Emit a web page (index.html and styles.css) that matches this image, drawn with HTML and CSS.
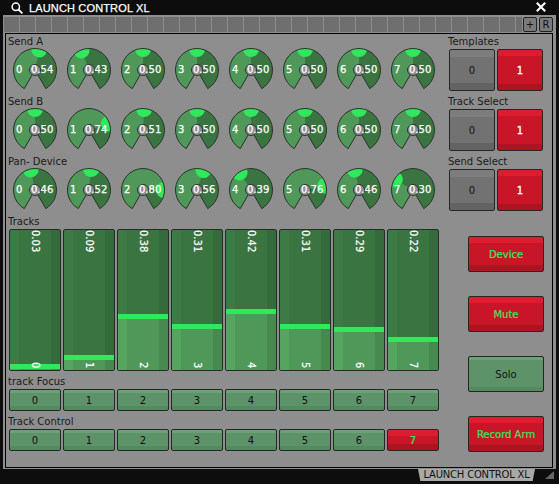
FILE: index.html
```html
<!DOCTYPE html>
<html lang="en">
<head>
<meta charset="utf-8">
<title>Launch Control XL</title>
<link rel="stylesheet" href="styles.css">
</head>
<body>
<svg class="defs" width="0" height="0" aria-hidden="true">
  <defs>
    <clipPath id="dial-clip"><path d="M22 22L11.25 40.62A21.5 21.5 0 1 1 32.75 40.62Z"/></clipPath>
    <symbol id="dial" viewBox="0 0 44 44">
      <g clip-path="url(#dial-clip)">
        <rect class="dial-dark" width="44" height="44"/>
        <circle class="dial-light" cx="22" cy="22" r="12" pathLength="360"/>
        <circle class="dial-cap" cx="22" cy="1" r="8"/>
      </g>
      <path class="dial-line" d="M22 22L11.25 40.62A21.5 21.5 0 1 1 32.75 40.62Z"/>
      <circle class="dial-hole" cx="22" cy="22" r="5.5"/>
    </symbol>
  </defs>
</svg>
<div class="window">
  <header class="titlebar">
    <svg class="search" width="12" height="12" viewBox="0 0 12 12"><circle cx="4.8" cy="4.8" r="3.7" fill="none" stroke="#fff" stroke-width="1.5"/><path d="M7.4 7.4L11.4 11.4" stroke="#fff" stroke-width="1.9"/></svg>
    <span class="title">LAUNCH CONTROL XL</span>
    <svg class="close" width="10" height="10" viewBox="0 0 10 10"><path d="M.8 .8L9.2 9.2M9.2 .8L.8 9.2" stroke="#fff" stroke-width="2.1"/></svg>
  </header>
  <div class="toolbar">
    <div class="cells"></div>
    <div class="tool">+</div>
    <div class="tool">R</div>
  </div>
  <div class="frame">
    <main class="panel">
      <section class="left">
        <div class="label">Send A</div>
        <div class="knobs">
          <div class="knob" style="--v:.54"><svg class="dial" viewBox="0 0 44 44"><use href="#dial"/></svg><span class="idx">0</span><span class="val">0.54</span></div>
          <div class="knob" style="--v:.43"><svg class="dial" viewBox="0 0 44 44"><use href="#dial"/></svg><span class="idx">1</span><span class="val">0.43</span></div>
          <div class="knob" style="--v:.5"><svg class="dial" viewBox="0 0 44 44"><use href="#dial"/></svg><span class="idx">2</span><span class="val">0.50</span></div>
          <div class="knob" style="--v:.5"><svg class="dial" viewBox="0 0 44 44"><use href="#dial"/></svg><span class="idx">3</span><span class="val">0.50</span></div>
          <div class="knob" style="--v:.5"><svg class="dial" viewBox="0 0 44 44"><use href="#dial"/></svg><span class="idx">4</span><span class="val">0.50</span></div>
          <div class="knob" style="--v:.5"><svg class="dial" viewBox="0 0 44 44"><use href="#dial"/></svg><span class="idx">5</span><span class="val">0.50</span></div>
          <div class="knob" style="--v:.5"><svg class="dial" viewBox="0 0 44 44"><use href="#dial"/></svg><span class="idx">6</span><span class="val">0.50</span></div>
          <div class="knob" style="--v:.5"><svg class="dial" viewBox="0 0 44 44"><use href="#dial"/></svg><span class="idx">7</span><span class="val">0.50</span></div>
        </div>
        <div class="label">Send B</div>
        <div class="knobs">
          <div class="knob" style="--v:.5"><svg class="dial" viewBox="0 0 44 44"><use href="#dial"/></svg><span class="idx">0</span><span class="val">0.50</span></div>
          <div class="knob" style="--v:.74"><svg class="dial" viewBox="0 0 44 44"><use href="#dial"/></svg><span class="idx">1</span><span class="val">0.74</span></div>
          <div class="knob" style="--v:.51"><svg class="dial" viewBox="0 0 44 44"><use href="#dial"/></svg><span class="idx">2</span><span class="val">0.51</span></div>
          <div class="knob" style="--v:.5"><svg class="dial" viewBox="0 0 44 44"><use href="#dial"/></svg><span class="idx">3</span><span class="val">0.50</span></div>
          <div class="knob" style="--v:.5"><svg class="dial" viewBox="0 0 44 44"><use href="#dial"/></svg><span class="idx">4</span><span class="val">0.50</span></div>
          <div class="knob" style="--v:.5"><svg class="dial" viewBox="0 0 44 44"><use href="#dial"/></svg><span class="idx">5</span><span class="val">0.50</span></div>
          <div class="knob" style="--v:.5"><svg class="dial" viewBox="0 0 44 44"><use href="#dial"/></svg><span class="idx">6</span><span class="val">0.50</span></div>
          <div class="knob" style="--v:.5"><svg class="dial" viewBox="0 0 44 44"><use href="#dial"/></svg><span class="idx">7</span><span class="val">0.50</span></div>
        </div>
        <div class="label">Pan- Device</div>
        <div class="knobs">
          <div class="knob" style="--v:.46"><svg class="dial" viewBox="0 0 44 44"><use href="#dial"/></svg><span class="idx">0</span><span class="val">0.46</span></div>
          <div class="knob" style="--v:.52"><svg class="dial" viewBox="0 0 44 44"><use href="#dial"/></svg><span class="idx">1</span><span class="val">0.52</span></div>
          <div class="knob" style="--v:.8"><svg class="dial" viewBox="0 0 44 44"><use href="#dial"/></svg><span class="idx">2</span><span class="val">0.80</span></div>
          <div class="knob" style="--v:.56"><svg class="dial" viewBox="0 0 44 44"><use href="#dial"/></svg><span class="idx">3</span><span class="val">0.56</span></div>
          <div class="knob" style="--v:.39"><svg class="dial" viewBox="0 0 44 44"><use href="#dial"/></svg><span class="idx">4</span><span class="val">0.39</span></div>
          <div class="knob" style="--v:.76"><svg class="dial" viewBox="0 0 44 44"><use href="#dial"/></svg><span class="idx">5</span><span class="val">0.76</span></div>
          <div class="knob" style="--v:.46"><svg class="dial" viewBox="0 0 44 44"><use href="#dial"/></svg><span class="idx">6</span><span class="val">0.46</span></div>
          <div class="knob" style="--v:.3"><svg class="dial" viewBox="0 0 44 44"><use href="#dial"/></svg><span class="idx">7</span><span class="val">0.30</span></div>
        </div>
        <div class="label">Tracks</div>
        <div class="faders">
          <div class="fader" style="--v:.03"><div class="fill"></div><span class="fv">0.03</span><span class="fn">0</span></div>
          <div class="fader" style="--v:.09"><div class="fill"></div><span class="fv">0.09</span><span class="fn">1</span></div>
          <div class="fader" style="--v:.38"><div class="fill"></div><span class="fv">0.38</span><span class="fn">2</span></div>
          <div class="fader" style="--v:.31"><div class="fill"></div><span class="fv">0.31</span><span class="fn">3</span></div>
          <div class="fader" style="--v:.42"><div class="fill"></div><span class="fv">0.42</span><span class="fn">4</span></div>
          <div class="fader" style="--v:.31"><div class="fill"></div><span class="fv">0.31</span><span class="fn">5</span></div>
          <div class="fader" style="--v:.29"><div class="fill"></div><span class="fv">0.29</span><span class="fn">6</span></div>
          <div class="fader" style="--v:.22"><div class="fill"></div><span class="fv">0.22</span><span class="fn">7</span></div>
        </div>
        <div class="label">track Focus</div>
        <div class="steps">
          <div class="btn green">0</div><div class="btn green">1</div><div class="btn green">2</div><div class="btn green">3</div>
          <div class="btn green">4</div><div class="btn green">5</div><div class="btn green">6</div><div class="btn green">7</div>
        </div>
        <div class="label">Track Control</div>
        <div class="steps">
          <div class="btn green">0</div><div class="btn green">1</div><div class="btn green">2</div><div class="btn green">3</div>
          <div class="btn green">4</div><div class="btn green">5</div><div class="btn green">6</div><div class="btn red lime">7</div>
        </div>
      </section>
      <section class="right">
        <div class="label">Templates</div>
        <div class="pair"><div class="btn grey">0</div><div class="btn red white">1</div></div>
        <div class="label">Track Select</div>
        <div class="pair"><div class="btn grey">0</div><div class="btn red white">1</div></div>
        <div class="label">Send Select</div>
        <div class="pair"><div class="btn grey">0</div><div class="btn red white">1</div></div>
        <div class="big-stack">
          <div class="btn big red lime">Device</div>
          <div class="btn big red lime">Mute</div>
          <div class="btn big green">Solo</div>
          <div class="btn big red lime">Record Arm</div>
        </div>
      </section>
    </main>
  </div>
  <footer class="footer">
    <div class="tab">LAUNCH CONTROL XL</div>
    <svg class="grip" width="9" height="8" viewBox="0 0 9 8"><path d="M0 8L9 8L9 0Z" fill="#666"/></svg>
  </footer>
</div>
</body>
</html>
```
FILE: styles.css
```css
* { box-sizing: border-box; }
html, body { margin: 0; padding: 0; }
body { width: 559px; height: 484px; background: #0d0d0d; overflow: hidden; font-family: "DejaVu Sans", sans-serif; font-size: 10px; color: #111; }
.defs { position: absolute; }
.window { display: flex; flex-direction: column; height: 484px; padding: 0 3px; }
.titlebar { height: 15px; display: flex; align-items: center; color: #fff; padding: 0 10px 0 8px; flex: none; }
.search { margin-right: 6px; flex: none; }
.title { font-family: "Liberation Sans", sans-serif; font-size: 11px; letter-spacing: .15px; -webkit-text-stroke: 0.25px #fff; }
.close { margin-left: auto; margin-top: -1px; flex: none; }

.toolbar { height: 18px; display: flex; gap: 2px; background: #8e8e8e; padding: 2px 3px 1px 1px; flex: none; }
.cells { flex: 1; margin-right: -1px; background: repeating-linear-gradient(90deg, #6f6f6f 0 15px, #8e8e8e 15px 16px); }
.tool { width: 14px; height: 15px; display: flex; align-items: center; justify-content: center; color: #111; background: #7a7a7a; border: 1px solid #222; border-radius: 2px; }

.frame { background: #8e8e8e; padding: 0 3px 1px 2px; flex: none; }
.panel { height: 435px; border: 1px solid #000; background: #8e8e8e; display: flex; }
.left { width: 436px; padding: 1px 0 0 3px; flex: none; }
.right { width: 110px; padding: 1px 0 0 7px; flex: none; }
.label { line-height: 13px; height: 13px; color: #1a1a1a; margin-left: -1px; }

.knobs { display: grid; grid-template-columns: repeat(8, 54px); height: 47px; }
.knob { position: relative; width: 44px; height: 44px; margin-left: 4px; }
.dial { display: block; width: 44px; height: 44px; overflow: visible; }
.dial-dark { fill: #3a7441; }
.dial-light { fill: none; stroke: #4f985a; stroke-width: 24; stroke-dasharray: calc(var(--v) * 300) 360; transform: rotate(-240deg); transform-origin: 22px 22px; }
.dial-cap { fill: #2fe85c; transform: rotate(calc(var(--v) * 300deg - 150deg)); transform-origin: 22px 22px; }
.dial-line { fill: none; stroke: #2b332c; stroke-width: 1; }
.dial-hole { fill: #8e8e8e; stroke: #2b332c; stroke-width: 1; }
.idx, .val { position: absolute; top: 15px; color: #fff; line-height: 13px; -webkit-text-stroke: 0.25px #fff; }
.idx { left: 3px; }
.val { left: 18px; }

.faders { display: grid; grid-template-columns: repeat(8, 54px); margin: 1px 0 4px; }
.fader { position: relative; width: 52px; height: 142px; border: 1px solid #262b26; border-radius: 2px; overflow: hidden; background: linear-gradient(to right, #3d7a45 0 9px, #3a7441 9px 41px, #356a3c 41px); }
.fill { position: absolute; left: 0; right: 0; bottom: 0; height: calc(var(--v) * 141px + 2px); border-top: 5px solid #2fe85c; background: linear-gradient(to right, #56a460 0 9px, #4f985a 9px 41px, #48894f 41px); }
.fv, .fn { position: absolute; left: 0; width: 100%; writing-mode: vertical-rl; line-height: 50px; color: #fff; white-space: nowrap; -webkit-text-stroke: 0.2px #fff; }
.fv { top: 0; }
.fn { bottom: 2px; }

.btn { display: flex; align-items: center; justify-content: center; border: 1px solid #262626; border-radius: 2px; color: #111; }
.steps { display: grid; grid-template-columns: repeat(8, 54px); height: 22px; margin: 1px 0 4px; }
.steps .btn { width: 52px; height: 22px; }
.green { background: linear-gradient(#6aa178 0 3px, #5e9369 3px calc(100% - 4px), #548a60 calc(100% - 4px)); }
.red { background: linear-gradient(#dc1c2f 0 6px, #c81628 6px calc(100% - 6px), #ae1322 calc(100% - 6px)); }
.grey { background: linear-gradient(#7d7d7d 0 7px, #727272 7px calc(100% - 7px), #636363 calc(100% - 7px)); }
.lime { color: #31e85c; -webkit-text-stroke: 0.2px #31e85c; }
.white { color: #fff; -webkit-text-stroke: 0.3px #fff; }
.pair { display: grid; grid-template-columns: 46px 46px; column-gap: 2px; height: 42px; margin: 1px 0 4px; }
.big-stack { display: flex; flex-direction: column; gap: 24px; margin: 25px 0 0 19px; }
.big { width: 76px; height: 36px; }

.footer { display: flex; align-items: flex-start; flex: none; padding-left: 415px; }
.tab { width: 117px; height: 12px; background: #a9a9a9; line-height: 11px; text-align: center; color: #111; letter-spacing: -.2px; clip-path: polygon(0 0, 100% 0, 98% 100%, 2% 100%); }
.grip { margin: 2px 0 0 10px; }
```
